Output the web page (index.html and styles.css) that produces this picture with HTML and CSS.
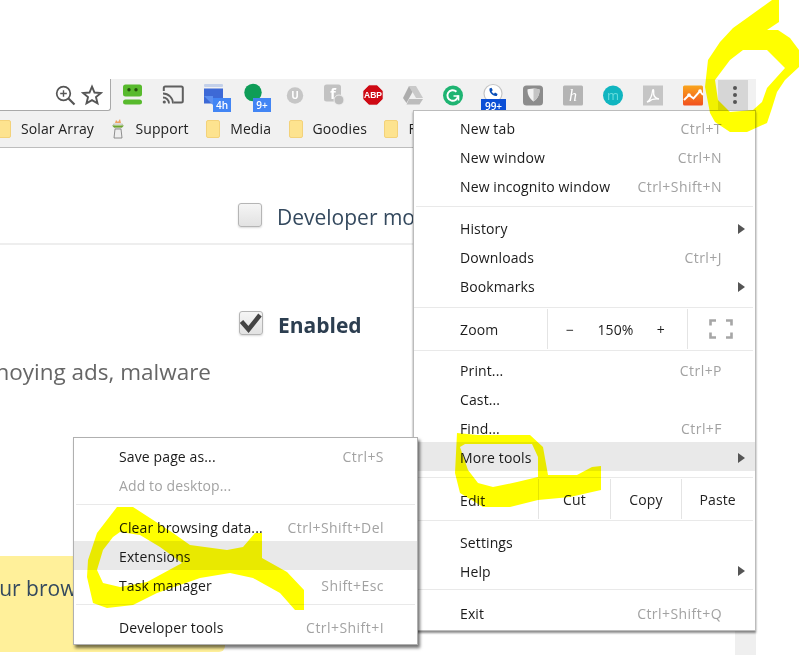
FILE: index.html
```html
<!DOCTYPE html>
<html lang="en">
<head>
<meta charset="utf-8">
<title>Chrome menu – Extensions</title>
<link rel="stylesheet" href="styles.css">
</head>
<body>
<div class="window">
  <div class="toolbar">
    <div class="omnibox">
      <svg class="omni-icon" viewBox="0 0 22 22"><circle cx="9.500" cy="9.500" r="6.800" fill="none" stroke="#555" stroke-width="1.700"/><path d="M14.500 14.500l6 6" stroke="#555" stroke-width="2.200"/><path d="M9.500 6.200v6.600M6.200 9.500h6.600" stroke="#555" stroke-width="1.400"/></svg>
      <svg class="omni-icon" viewBox="0 0 22 22"><path d="M11 2.600l2.500 5.900 6.400.5-4.900 4.100 1.500 6.200L11 16.100l-5.500 3.200L7 13.100 2.100 9l6.400-.5z" fill="none" stroke="#555" stroke-width="1.900"/></svg>
    </div>
    <div class="ext-row">
      <div class="ext"><svg viewBox="0 0 24 24"><rect x="2" y="1.500" width="19" height="12" rx="2.500" fill="#58ba2d"/><circle cx="8" cy="6.800" r="1.700" fill="#24510c"/><circle cx="15" cy="6.800" r="1.700" fill="#24510c"/><rect x="2" y="16.500" width="19" height="5" rx="2.500" fill="#58ba2d"/></svg></div>
      <div class="ext"><svg viewBox="0 0 24 24"><path d="M2.800 8V5a1.500 1.500 0 0 1 1.500-1.500h16a1.500 1.500 0 0 1 1.500 1.500v13a1.500 1.500 0 0 1-1.500 1.500h-7.500" fill="none" stroke="#5f5f5f" stroke-width="2"/><circle cx="3.300" cy="19" r="1.600" fill="#5f5f5f"/><path d="M2 14.500a6 6 0 0 1 6 6M2 10.500a10 10 0 0 1 10 10" fill="none" stroke="#5f5f5f" stroke-width="1.800"/></svg></div>
      <div class="ext"><svg viewBox="0 0 24 24"><rect x="3" y="1" width="19" height="3" rx="1" fill="#c3d0ea"/><rect x="3" y="5.500" width="19" height="15" fill="#3d69d6"/><path d="M3 13h9v9z" fill="#5b8ff0"/></svg><span class="badge">4h</span></div>
      <div class="ext"><svg viewBox="0 0 24 24"><circle cx="12" cy="9.500" r="8.700" fill="#0f9d58"/></svg><span class="badge">9+</span></div>
      <div class="ext"><svg viewBox="0 0 24 24"><circle cx="14" cy="12.500" r="8.200" fill="#c6c6c6"/><text x="14" y="16" class="ext-text u">U</text></svg></div>
      <div class="ext"><svg viewBox="0 0 24 24"><rect x="3" y="1.500" width="17" height="17" rx="2.500" fill="#c2c2c2"/><text x="12" y="15.500" class="ext-text f">f</text><circle cx="18" cy="17" r="5" fill="#bdbdbd" stroke="#eee"/></svg></div>
      <div class="ext"><svg viewBox="0 0 24 24"><path d="M8 2h8l6 6v8l-6 6H8l-6-6V8z" fill="#cf0a14" stroke="#e8e8e8" stroke-width=".6"/><text x="12" y="15" class="ext-text abp">ABP</text></svg></div>
      <div class="ext"><svg viewBox="0 0 24 24"><path d="M8 3h7l7 12h-7z" fill="#c9c9c9"/><path d="M8 3l3.500 6L5.500 20 2 15z" fill="#adadad"/><path d="M8 16h14l-3.500 5.500H5.500z" fill="#bcbcbc"/></svg></div>
      <div class="ext"><svg viewBox="0 0 24 24"><circle cx="12" cy="12.500" r="10" fill="#1eb472"/><path d="M17 12.500a5.300 5.300 0 1 1-1.600-3.800" fill="none" stroke="#fff" stroke-width="2"/><path d="M12.500 13H17.500V17.500" fill="none" stroke="#fff" stroke-width="1.600"/></svg></div>
      <div class="ext"><svg viewBox="0 0 24 24"><circle cx="12" cy="10.500" r="9" fill="#fff" stroke="#c4c4c4" stroke-width="1.200"/><path d="M8.500 5.500l2-.8 1.300 2.600-1.200 1c.5 1.200 1.200 2 2.400 2.500l1-1.200 2.600 1.300-.8 2c-4 .7-8-3.400-7.300-7.400z" fill="#0b4fb8"/></svg><span class="badge badge-dark">99+</span></div>
      <div class="ext"><svg viewBox="0 0 24 24"><rect x="2" y="2.500" width="20" height="20" rx="3.500" fill="#8c8c8c"/><path d="M12.500 5.500c3.500 0 6 1 6 1 .3 4.500-1.500 9-6 12-3.500-2.300-6.300-7-6-12 0 0 2.500-1 6-1z" fill="#f2f2f2"/><path d="M12.500 5.500c3.500 0 6 1 6 1 .3 4.500-1.500 9-6 12z" fill="#c4c4c4"/></svg></div>
      <div class="ext"><svg viewBox="0 0 24 24"><rect x="2" y="2.500" width="20" height="20" rx="1.500" fill="#b4b4b4"/><text x="12" y="18" class="ext-text k">h</text></svg></div>
      <div class="ext"><svg viewBox="0 0 24 24"><circle cx="12" cy="12.500" r="10" fill="#10b5c0"/><text x="12" y="17" class="ext-text m">m</text></svg></div>
      <div class="ext"><svg viewBox="0 0 24 24"><rect x="2" y="2.500" width="20" height="20" fill="#c5c5c5"/><path d="M6 19c3-2 5-6 5.500-11 .2-2 1.500-2 1.200.5-.5 4 1.500 7 5.300 7.500-4-.5-8 .5-10 2.500z" fill="none" stroke="#fff" stroke-width="1.300"/></svg></div>
      <div class="ext"><svg viewBox="0 0 24 24"><defs><linearGradient id="an" x1="0" y1="0" x2="0" y2="1"><stop offset="0" stop-color="#f9a51d"/><stop offset="1" stop-color="#f2501e"/></linearGradient></defs><rect x="2" y="2.500" width="20" height="20" rx="1.500" fill="url(#an)"/><path d="M3 17l5-5 4.500 3.500L19 8l3 4" fill="none" stroke="#fff" stroke-width="2"/><circle cx="8" cy="12" r="1.800" fill="#fff"/><circle cx="19" cy="8" r="1.800" fill="#fff"/></svg></div>
      <div class="more-btn"><span class="dot"></span><span class="dot"></span><span class="dot"></span></div>
    </div>
  </div>

  <div class="bookmarks">
    <div class="bm bm-first"><span class="folder"></span>Solar Array</div>
    <div class="bm"><svg class="support" viewBox="0 0 14 20"><path d="M4 4l1-3 2 2 2-3 1 4z" fill="#f0a060"/><path d="M2.500 5h9l-1 4h-7z" fill="#e8e8d8" stroke="#999" stroke-width=".5"/><path d="M1 6.500h12l-2 2H3z" fill="#6aa52c"/><path d="M4 10h6l1 9H3z" fill="#eee" stroke="#777" stroke-width=".8"/></svg>Support</div>
    <div class="bm"><span class="folder"></span>Media</div>
    <div class="bm"><span class="folder"></span>Goodies</div>
    <div class="bm"><span class="folder"></span>Forums</div>
  </div>

  <div class="body-row">
    <main class="main">
      <section class="dev-row">
        <span class="checkbox"></span>
        <span class="dev-label">Developer mode</span>
      </section>
      <section class="ext-item">
        <div class="enable-row">
          <span class="checkbox"><svg class="check" viewBox="0 0 22 22"><path d="M1.500 9.500l7 8L20 3" fill="none" stroke="#444" stroke-width="4.500"/></svg></span>
          <span class="enable-label">Enabled</span>
        </div>
        <div class="desc"><span>Blocks annoying ads, malware</span></div>
      </section>
      <div class="note"><span class="note-text">your browser</span></div>
    </main>
    <div class="rail"></div>
  </div>

  <nav class="menu main-menu">
    <div class="item"><span>New tab</span><span class="key">Ctrl+T</span></div>
    <div class="item"><span>New window</span><span class="key">Ctrl+N</span></div>
    <div class="item"><span>New incognito window</span><span class="key">Ctrl+Shift+N</span></div>
    <div class="sep sep-first"></div>
    <div class="item"><span>History</span><i class="arrow"></i></div>
    <div class="item"><span>Downloads</span><span class="key">Ctrl+J</span></div>
    <div class="item"><span>Bookmarks</span><i class="arrow"></i></div>
    <div class="split zoom-row">
      <span class="split-label">Zoom</span>
      <div class="zoom-cell"><span>−</span><span>150%</span><span>+</span></div>
      <div class="full-cell"><svg viewBox="0 0 24 20"><path d="M1.500 6.500V1.500H7M17 1.500h5.500V6.500M22.500 13.500v5H17M7 18.500H1.500v-5" fill="none" stroke="#a6a6a6" stroke-width="2.600"/></svg></div>
    </div>
    <div class="item"><span>Print...</span><span class="key">Ctrl+P</span></div>
    <div class="item"><span>Cast...</span></div>
    <div class="item"><span>Find...</span><span class="key">Ctrl+F</span></div>
    <div class="item active"><span>More tools</span><i class="arrow"></i></div>
    <div class="split edit-row">
      <span class="split-label edit-label">Edit</span>
      <div class="edit-cell">Cut</div>
      <div class="edit-cell">Copy</div>
      <div class="edit-cell">Paste</div>
    </div>
    <div class="item low"><span>Settings</span></div>
    <div class="item low"><span>Help</span><i class="arrow"></i></div>
    <div class="sep"></div>
    <div class="item low"><span>Exit</span><span class="key">Ctrl+Shift+Q</span></div>
  </nav>

  <nav class="menu sub-menu">
    <div class="item"><span>Save page as...</span><span class="key">Ctrl+S</span></div>
    <div class="item disabled"><span>Add to desktop...</span></div>
    <div class="sep"></div>
    <div class="item"><span>Clear browsing data...</span><span class="key">Ctrl+Shift+Del</span></div>
    <div class="item active"><span>Extensions</span></div>
    <div class="item"><span>Task manager</span><span class="key">Shift+Esc</span></div>
    <div class="sep"></div>
    <div class="item"><span>Developer tools</span><span class="key">Ctrl+Shift+I</span></div>
  </nav>

  <svg class="scribble" viewBox="0 0 799 655">
    <path fill-rule="evenodd" d="M772 0L779 0L779 22L767 30L778 30L790 38L799 50L799 67L785 80L777 92L772 108L767 123L747 132L730 132L715 122L710 113L705 87L708 60L720 42L733 28L747 18ZM743 50L767 50L785 68L767 88L762 102L753 110L730 112L718 100L715 80L730 60Z"/>
    <path fill-rule="evenodd" d="M457 433L477 435L530 435L543 447L548 475L577 475L592 467L601 466L601 490L570 497L538 500L510 507L483 507L460 493L455 473ZM465 444L532 444L538 457L538 477L517 482L493 487L478 483L468 470L460 447Z"/>
    <path fill-rule="evenodd" d="M117 507L133 507L150 518L173 533L190 545L227 550L243 547L255 533L262 533L262 558L287 572L304 590L304 610L295 610L280 593L253 578L230 573L200 578L157 593L133 605L107 608L93 603L87 577L88 560L97 533ZM120 532L140 535L160 547L182 563L147 582L120 587L103 583L97 570L103 550L113 537Z"/>
  </svg>
</div>
</body>
</html>
```
FILE: styles.css
```css
* { box-sizing: border-box; }
html, body { margin: 0; background: #fff; }
body { font-family: "Open Sans", "Noto Sans", sans-serif; color: #1d1d1d; }

.window { position: relative; width: 799px; height: 655px; overflow: hidden; padding-top: 79px; }

.toolbar { display: flex; width: 756px; height: 31px; background: #f1f1f1; }
.omnibox { display: flex; justify-content: flex-end; align-items: center; gap: 5px; width: 111px; height: 32px; padding-right: 7px; background: #fff; border-right: 1px solid #a9a9a9; border-bottom: 1px solid #a9a9a9; border-bottom-right-radius: 3px; }
.omni-icon { width: 22px; height: 22px; }
.ext-row { display: flex; align-items: center; padding-left: 2px; }
.ext { position: relative; width: 40px; height: 31px; display: flex; justify-content: center; align-items: center; }
.ext svg { width: 24px; height: 24px; }
.ext-text { text-anchor: middle; font-family: "Open Sans", sans-serif; fill: #fff; }
.u { font-size: 10px; font-weight: 700; }
.f { font-size: 15px; font-weight: 700; }
.abp { font-size: 8.500px; font-weight: 800; font-family: "Liberation Sans", sans-serif; }
.k { font-size: 16px; font-family: "Liberation Serif", serif; font-style: italic; }
.m { font-size: 13px; fill: #66dcdc; }
.badge { position: absolute; left: 20px; top: 19px; min-width: 18px; height: 14px; padding: 0 2px; background: #4285f4; color: #fff; font-size: 10px; line-height: 14px; font-weight: 600; text-align: center; }
.badge-dark { left: 8px; top: 20px; width: 25px; background: #0b4fd6; }
.more-btn { display: flex; flex-direction: column; align-items: center; justify-content: center; gap: 3px; width: 30px; height: 30px; margin-left: 5px; padding-left: 3px; background: #d6d6d6; }
.dot { width: 4px; height: 4px; border-radius: 50%; background: #555; }

.bookmarks { display: flex; align-items: center; width: 756px; height: 38px; background: #f1f1f1; border-bottom: 1px solid #bdbdbd; font-size: 14px; letter-spacing: .1px; color: #222; white-space: nowrap; overflow: hidden; }
.bm { display: flex; align-items: center; gap: 10px; margin-right: 17.500px; }
.bm-first { margin-left: -3px; }
.folder { position: relative; width: 14px; height: 18px; background: #fde38f; border: 1px solid #f3d27a; border-radius: 2px; }
.support { width: 14px; height: 20px; margin-left: 0; }

.body-row { display: flex; width: 756px; height: 507px; }
.main { flex: 1; min-width: 0; overflow: hidden; }
.rail { width: 21px; background: #efefef; }
.dev-row { display: flex; align-items: center; gap: 15px; height: 97px; padding: 56px 0 17px 238px; border-bottom: 2px solid #eee; }
.checkbox { display: flex; flex: none; width: 24px; height: 24px; background: linear-gradient(#f5f5f5, #e2e2e2); border: 1px solid #b5b5b5; border-radius: 3px; box-shadow: 0 1px 2px rgba(0,0,0,.15); }
.checkbox .check { width: 22px; height: 22px; filter: blur(.6px); }
.dev-label { margin-top: 4px; font-size: 21px; color: #34495e; white-space: nowrap; }
.ext-item { padding-top: 66px; }
.enable-row { display: flex; align-items: center; gap: 15px; height: 24px; padding-left: 239px; }
.enable-label { margin-top: 4px; font-size: 21px; font-weight: 700; color: #2c3e50; }
.desc { display: flex; justify-content: flex-end; width: 211px; height: 28px; margin-top: 23px; overflow: hidden; white-space: nowrap; font-size: 22.500px; line-height: 28px; color: #666; }
.note { width: 225px; height: 96px; margin-top: 170px; padding-top: 18px; background: #fff09a; border-bottom-right-radius: 6px; overflow: hidden; white-space: nowrap; }
.note-text { display: block; margin-left: -24px; font-size: 21px; line-height: 28px; color: #34495e; }

.menu { position: absolute; display: flex; flex-direction: column; background: #fff; font-size: 14px; letter-spacing: .12px; white-space: nowrap; }
.main-menu { left: 413px; top: 110px; width: 343px; height: 521px; padding: 2px 0 3px; border: 1px solid #bcbcbc; box-shadow: 0 2px 2px rgba(0,0,0,.45); }
.sub-menu { left: 73px; top: 437px; width: 345px; height: 208px; padding: 3px 0; border: 1px solid #b0b0b0; box-shadow: 2px 3px 3px rgba(0,0,0,.55); }
.item { display: flex; justify-content: space-between; align-items: center; flex: none; height: 29px; padding: 2px 33px 0 46px; color: #1a1a1a; }
.item.low { padding-top: 3px; }
.sub-menu .item { padding-left: 45px; padding-right: 33px; }
.item.active { background: #e9e9e9; }
.item.disabled { color: #a3a3a3; }
.key { color: #a2a2a2; letter-spacing: .45px; }
.arrow { width: 0; height: 0; margin-right: -23px; border-left: 7px solid #555; border-top: 5px solid transparent; border-bottom: 5px solid transparent; }
.sep { flex: none; height: 1px; margin: 5px 2px 7px; background: #e9e9e9; }
.sep-first { margin-top: 6px; margin-bottom: 6px; }
.split { display: flex; flex: none; height: 44px; margin: 6px 2px 4px 0; border-top: 1px solid #e9e9e9; border-bottom: 1px solid #e9e9e9; }
.zoom-row { margin-top: 7px; }
.split-label { display: flex; align-items: center; padding: 0 0 0 46px; }
.zoom-row .split-label { width: 133px; }
.edit-label { width: 125px; padding-top: 3px; }
.zoom-cell { display: flex; justify-content: space-between; align-items: center; width: 140px; margin: 1px 0; padding: 0 22px 0 18px; border-left: 1px solid #e4e4e4; }
.full-cell { display: flex; justify-content: center; align-items: center; flex: 1; margin: 1px 0; border-left: 1px solid #e4e4e4; }
.full-cell svg { width: 24px; height: 20px; }
.edit-row { margin-bottom: 5px; }
.edit-cell { display: flex; justify-content: center; align-items: center; width: 72.500px; margin: 1px 0; border-left: 1px solid #e4e4e4; color: #222; }

.scribble { position: absolute; left: 0; top: 0; width: 799px; height: 655px; pointer-events: none; mix-blend-mode: multiply; fill: #ffff00; }
```
